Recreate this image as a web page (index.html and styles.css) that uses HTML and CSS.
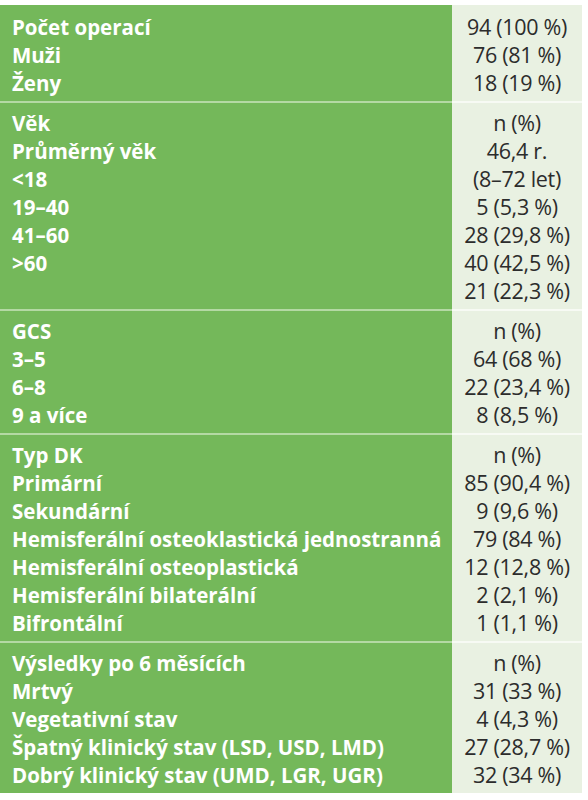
FILE: index.html
```html
<!DOCTYPE html>
<html lang="cs">
<head>
<meta charset="utf-8">
<link rel="stylesheet" href="styles.css">
</head>
<body>
<div class="table">
  <div class="section first">
    <div class="labels">
      <div>Počet operací</div>
      <div>Muži</div>
      <div>Ženy</div>
    </div>
    <div class="values">
      <div>94 (100 %)</div>
      <div>76 (81 %)</div>
      <div>18 (19 %)</div>
    </div>
  </div>
  <div class="section">
    <div class="labels">
      <div>Věk</div>
      <div>Průměrný věk</div>
      <div>&lt;18</div>
      <div>19–40</div>
      <div>41–60</div>
      <div>&gt;60</div>
      <div>&nbsp;</div>
    </div>
    <div class="values">
      <div>n (%)</div>
      <div>46,4 r.</div>
      <div>(8–72 let)</div>
      <div>5 (5,3 %)</div>
      <div>28 (29,8 %)</div>
      <div>40 (42,5 %)</div>
      <div>21 (22,3 %)</div>
    </div>
  </div>
  <div class="section">
    <div class="labels">
      <div>GCS</div>
      <div>3–5</div>
      <div>6–8</div>
      <div>9 a více</div>
    </div>
    <div class="values">
      <div>n (%)</div>
      <div>64 (68 %)</div>
      <div>22 (23,4 %)</div>
      <div>8 (8,5 %)</div>
    </div>
  </div>
  <div class="section">
    <div class="labels">
      <div>Typ DK</div>
      <div>Primární</div>
      <div>Sekundární</div>
      <div>Hemisferální osteoklastická jednostranná</div>
      <div>Hemisferální osteoplastická</div>
      <div>Hemisferální bilaterální</div>
      <div>Bifrontální</div>
    </div>
    <div class="values">
      <div>n (%)</div>
      <div>85 (90,4 %)</div>
      <div>9 (9,6 %)</div>
      <div>79 (84 %)</div>
      <div>12 (12,8 %)</div>
      <div>2 (2,1 %)</div>
      <div>1 (1,1 %)</div>
    </div>
  </div>
  <div class="section">
    <div class="labels">
      <div>Výsledky po 6 měsících</div>
      <div>Mrtvý</div>
      <div>Vegetativní stav</div>
      <div>Špatný klinický stav (LSD, USD, LMD)</div>
      <div>Dobrý klinický stav (UMD, LGR, UGR)</div>
    </div>
    <div class="values">
      <div>n (%)</div>
      <div>31 (33 %)</div>
      <div>4 (4,3 %)</div>
      <div>27 (28,7 %)</div>
      <div>32 (34 %)</div>
    </div>
  </div>
</div>
</body>
</html>
```

FILE: styles.css
```css
html, body {
  margin: 0;
  padding: 0;
  background: #ffffff;
}
body {
  padding-top: 5px;
  font-family: "Open Sans", "Noto Sans", sans-serif;
}
.table {
  width: 582px;
  display: flex;
  flex-direction: column;
}
.section {
  display: flex;
}
.labels, .values {
  line-height: 28px;
  padding-top: 6px;
  padding-bottom: 4px;
  border-top: 2px solid;
}
.labels > div, .values > div {
  height: 28px;
}
.labels {
  width: 452px;
  box-sizing: border-box;
  padding-left: 12px;
  background: #74b85a;
  border-top-color: #b4d9a4;
  color: #ffffff;
  font-size: 20.5px;
  font-weight: 700;
  white-space: nowrap;
}
.values {
  flex: 1;
  background: #e9f1e2;
  border-top-color: #f7faf4;
  color: #2c2c2c;
  font-size: 21.5px;
  text-align: center;
  letter-spacing: -0.3px;
  white-space: nowrap;
}
.first .labels, .first .values {
  border-top: none;
  padding-top: 8px;
  padding-bottom: 4px;
}
```
